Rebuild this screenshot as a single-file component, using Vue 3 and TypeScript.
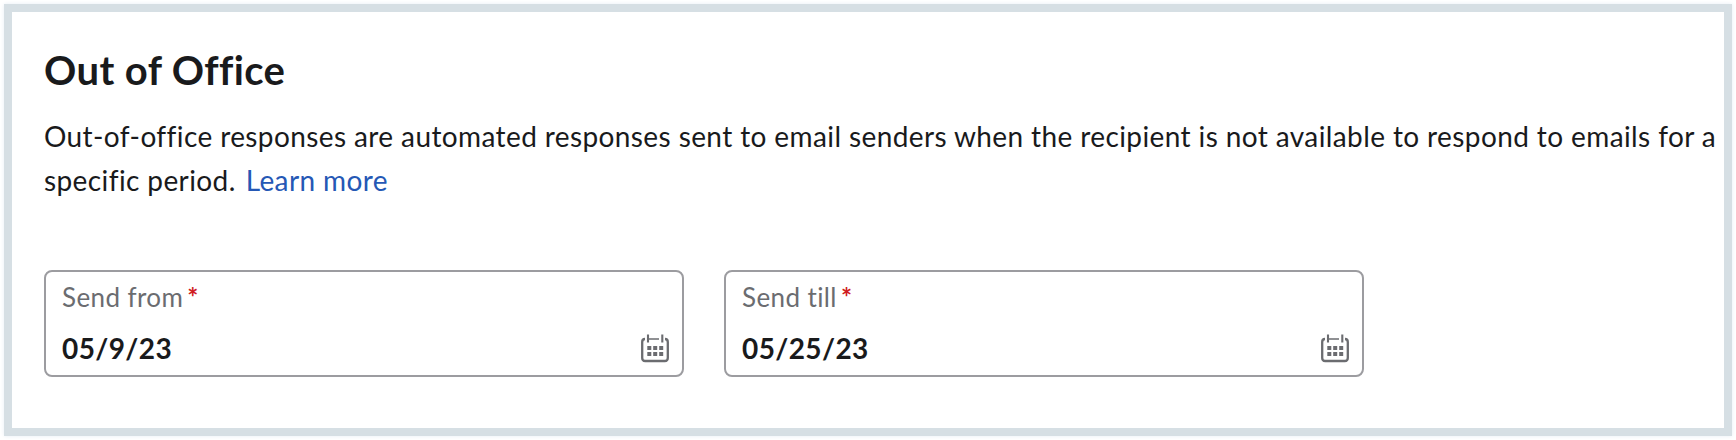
<script setup lang="ts">
const fields: { label: string; value: string }[] = [
  { label: 'Send from', value: '05/9/23' },
  { label: 'Send till', value: '05/25/23' },
]
</script>

<template>
  <main class="page">
    <section class="panel">
      <h1 class="title">Out of Office</h1>
      <p class="intro">
        <span class="line">Out-of-office responses are automated responses sent to email senders when the recipient is not available to respond to emails for a</span>
        <span class="line">specific period.<a class="link">Learn more</a></span>
      </p>
      <div class="fields">
        <div v-for="f in fields" :key="f.label" class="field">
          <div class="label">{{ f.label }}<span class="star">*</span></div>
          <div class="value">{{ f.value }}</div>
          <svg class="icon" viewBox="0 0 28 29" fill="none" stroke="#6b6c70">
            <path d="M4 5Q1.2 5 1.2 8V24Q1.2 27 4.2 27H23.8Q26.8 27 26.8 24V8Q26.8 5 24 5" stroke-width="2.3" />
            <path d="M7 5H18M21 5H22" stroke-width="1.5" />
            <path d="M7 .5V8.5M21.3 .5V8.5" stroke-width="2.1" />
            <path d="M6.3 14H10.3M12.2 14H16.2M18.2 14H22.2M6.3 20H10.3M12.2 20H16.2M18.2 20H22.2" stroke-width="4.2" />
          </svg>
        </div>
      </div>
    </section>
  </main>
</template>

<style>
body { margin: 0; background: #fff; }
</style>
<style scoped>
.page { box-sizing: border-box; height: 440px; padding: 4px; font-family: Lato, sans-serif; color: #191a1c; letter-spacing: 0.395px; }
.panel { box-sizing: border-box; height: 432px; border: 8px solid #d6dfe4; padding: 34px 0 0 32px; box-shadow: 0 0 4px #e6edf5; }
.title { margin: 0; font-size: 40px; line-height: 48px; font-weight: 700; }
.intro { margin: 20px 0 0; font-size: 28px; line-height: 44px; white-space: nowrap; }
.line { display: block; }
.link { color: #2558b5; margin-left: 10px; }
.fields { display: flex; gap: 40px; margin-top: 68px; }
.field { position: relative; box-sizing: border-box; width: 640px; height: 107px; border: 2px solid #9c9ca0; border-radius: 8px; padding: 8px 16px; }
.label { font-size: 26px; line-height: 34px; color: #6b6c70; }
.star { color: #d01c22; margin-left: 4px; font-weight: 700; }
.value { font-size: 28px; line-height: 36px; font-weight: 700; margin-top: 16px; }
.icon { position: absolute; right: 13px; bottom: 12px; width: 28px; height: 29px; }
</style>
